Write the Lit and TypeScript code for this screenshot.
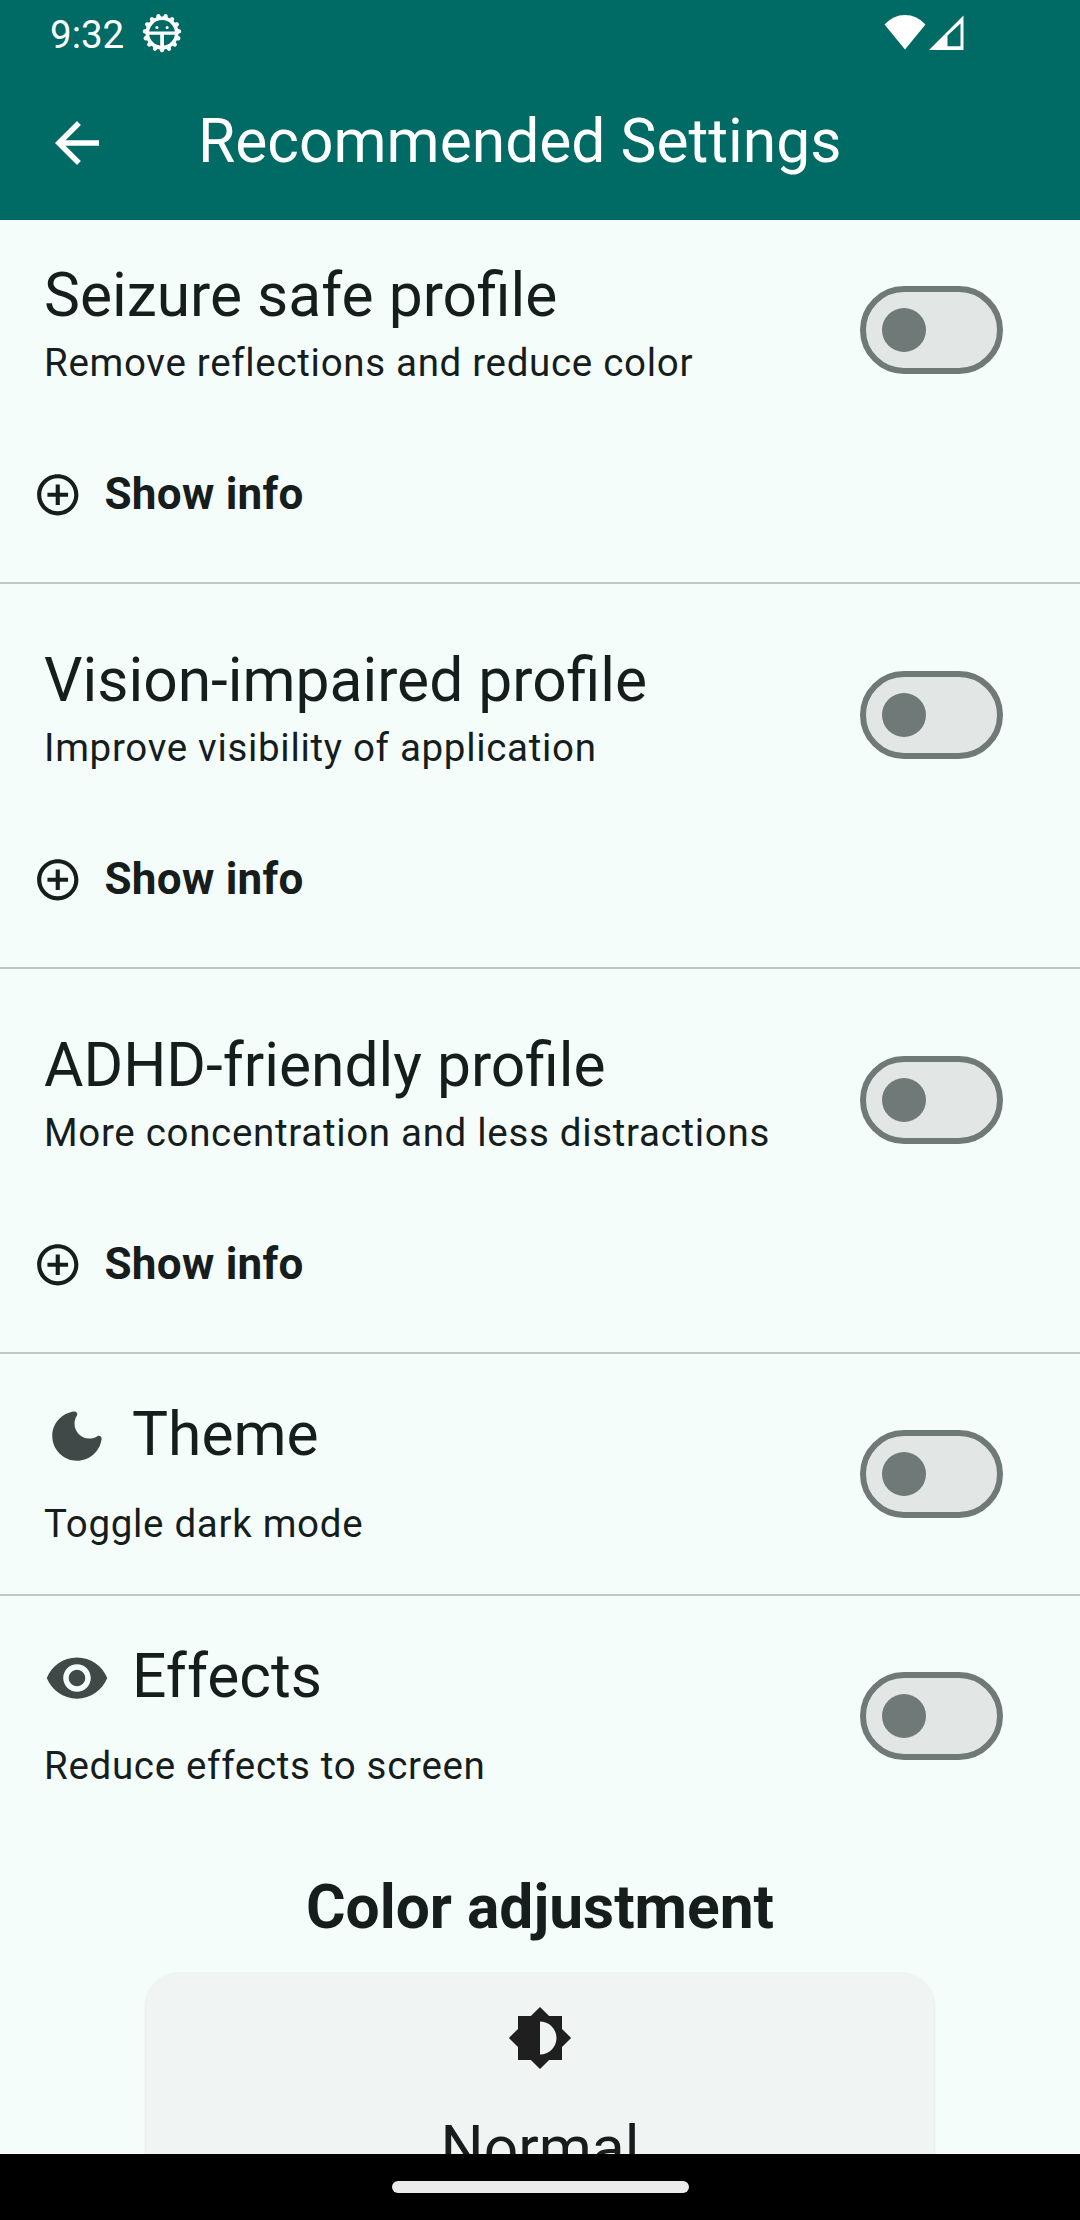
import { LitElement, html, css, svg } from "lit";
import { customElement, property } from "lit/decorators.js";

const ICONS: Record<string, string> = {
  back: "M20 11H7.83l5.59-5.59L12 4l-8 8 8 8 1.41-1.41L7.83 13H20v-2z",
  add: "M13 7h-2v4H7v2h4v4h2v-4h4v-2h-4V7zm-1-5C6.48 2 2 6.48 2 12s4.48 10 10 10 10-4.48 10-10S17.52 2 12 2zm0 18c-4.41 0-8-3.59-8-8s3.59-8 8-8 8 3.59 8 8-3.59 8-8 8z",
  moon: "M11.01 3.05C6.51 3.54 3 7.36 3 12c0 4.97 4.03 9 9 9 4.63 0 8.45-3.5 8.95-8 .09-.79-.78-1.42-1.54-.95-.84.54-1.84.85-2.91.85-2.98 0-5.4-2.42-5.4-5.4 0-1.06.31-2.06.84-2.89.45-.67-.04-1.63-.93-1.56z",
  eye: "M12 4.5C7 4.5 2.73 7.61 1 12c1.73 4.39 6 7.5 11 7.5s9.27-3.11 11-7.5c-1.73-4.39-6-7.5-11-7.5zM12 17c-2.76 0-5-2.24-5-5s2.24-5 5-5 5 2.24 5 5-2.24 5-5 5zm0-8c-1.66 0-3 1.34-3 3s1.34 3 3 3 3-1.34 3-3-1.34-3-3-3z",
  brightness: "M20 15.31L23.31 12 20 8.69V4h-4.69L12 .69 8.69 4H4v4.69L.69 12 4 15.31V20h4.69L12 23.31 15.31 20H20v-4.69zM12 18V6c3.31 0 6 2.69 6 6s-2.69 6-6 6z",
};

const icon = (name: string) => html`<svg class="icon" viewBox="0 0 24 24"><path d=${ICONS[name]} /></svg>`;

@customElement("status-bar")
class StatusBar extends LitElement {
  static styles = css`
    :host { display: flex; align-items: flex-start; height: 66px; padding: 0 116px 0 50px; box-sizing: border-box; color: #fff; }
    .clock { font-size: 38.5px; line-height: 46px; margin-top: 12px; width: 74px; white-space: nowrap; }
    .debug { width: 40px; height: 40px; margin: 13px 0 0 18px; }
    .signals { display: flex; gap: 3px; margin: 15px 0 0 auto; }
    .wifi { width: 42px; height: 35px; }
    .cell { width: 35px; height: 35px; }
  `;
  render() {
    const teeth = Array.from({ length: 15 }, (_, i) => svg`<path transform="rotate(${i * 24 + 12} 20 20)" d="M17.200 5.500L18 2.200Q18.300 .700 20 .700T22 2.200L22.800 5.500z" />`);
    return html`
      <span class="clock">9:32</span>
      <svg class="debug" viewBox="0 0 40 40" fill="#fff">
        ${teeth}
        <circle cx="20" cy="20" r="14.700" fill="none" stroke="#fff" stroke-width="3.600" />
        <path d="M7 18.500h26v3.200H7zM18.200 20h3.800v14h-3.800z" />
        <circle cx="14.900" cy="14.500" r="1.500" /><circle cx="25.100" cy="14.500" r="1.500" />
      </svg>
      <div class="signals">
        <svg class="wifi" viewBox="0 0 42 35" fill="#fff"><path d="M.5 9.5Q9 0 21 0t20.500 9.500L21 34.500z" /></svg>
        <svg class="cell" viewBox="0 0 35 35" fill="#fff"><path fill-rule="evenodd" d="M34.500.500v34.500H0zM18.500 20.500V31.200H31.500V8.500z" /></svg>
      </div>`;
  }
}

@customElement("toggle-switch")
class ToggleSwitch extends LitElement {
  static styles = css`
    :host { display: block; flex: none; }
    .track { display: flex; align-items: center; box-sizing: border-box; width: 143px; height: 88px; padding-left: 16px; border: 6px solid #6f7977; border-radius: 44px; background: #e2e6e5; }
    .thumb { width: 44px; height: 44px; border-radius: 50%; background: #6f7977; }
  `;
  render() {
    return html`<div class="track" role="switch" aria-checked="false"><div class="thumb"></div></div>`;
  }
}

const textStyles = css`
  .title { font-size: 60.5px; line-height: 77px; white-space: nowrap; }
  .subtitle { font-size: 38.5px; line-height: 55px; letter-spacing: 0.6875px; white-space: nowrap; }
  .icon { display: block; flex: none; fill: currentColor; }
`;

@customElement("profile-section")
class ProfileSection extends LitElement {
  @property() heading = "";
  @property() summary = "";
  static styles = [textStyles, css`
    :host { display: flex; flex-direction: column; flex: none; height: 385px; box-sizing: border-box; padding-top: 58px; border-bottom: 2px solid #bec9c7; }
    .row { display: flex; justify-content: space-between; height: 213px; padding: 0 77px 0 44px; }
    .subtitle { margin-top: 1px; }
    .switch { margin-top: 29px; }
    .info { display: flex; align-items: center; gap: 22px; height: 50px; padding-left: 33px; }
    .info .icon { width: 49.5px; height: 49.5px; }
    .label { font-size: 44px; font-weight: 700; line-height: 55px; letter-spacing: 0.275px; margin-top: -1px; }
  `];
  render() {
    return html`
      <div class="row">
        <div>
          <div class="title">${this.heading}</div>
          <div class="subtitle">${this.summary}</div>
        </div>
        <toggle-switch class="switch"></toggle-switch>
      </div>
      <div class="info">${icon("add")}<span class="label">Show info</span></div>`;
  }
}

@customElement("option-section")
class OptionSection extends LitElement {
  @property() heading = "";
  @property() summary = "";
  @property() glyph = "";
  static styles = [textStyles, css`
    :host { display: flex; flex: none; align-items: center; justify-content: space-between; height: 240px; box-sizing: border-box; padding: 0 77px 0 44px; }
    .text { align-self: flex-start; padding-top: 42px; }
    .head { display: flex; align-items: center; gap: 22px; }
    .head .icon { width: 66px; height: 66px; color: #3f4947; margin-top: 3px; }
    .subtitle { margin-top: 23px; }
  `];
  render() {
    return html`
      <div class="text">
        <div class="head">${icon(this.glyph)}<span class="title">${this.heading}</span></div>
        <div class="subtitle">${this.summary}</div>
      </div>
      <toggle-switch></toggle-switch>`;
  }
}

@customElement("app-root")
class AppRoot extends LitElement {
  static styles = [textStyles, css`
    :host { display: flex; flex-direction: column; width: 1080px; height: 2220px; overflow: hidden; background: #f4fdfa; color: #161d1c; font-family: Roboto, "Liberation Sans", sans-serif; }
    .top { flex: none; height: 220px; background: #006a65; color: #fff; }
    .bar { display: flex; align-items: center; gap: 88px; height: 154px; padding-left: 44px; }
    .bar .icon { width: 66px; height: 66px; }
    .bar .title { margin-top: -3px; }
    .content { display: flex; flex-direction: column; flex: 1; min-height: 0; overflow: hidden; }
    .first { margin-top: -21px; }
    .divided { border-bottom: 2px solid #bec9c7; height: 242px; }
    .section-title { flex: none; margin-top: 33px; text-align: center; font-weight: 700; }
    .card { display: flex; flex-direction: column; flex: none; align-items: center; align-self: center; box-sizing: border-box; width: 788px; height: 260px; margin-top: 26px; padding-top: 33px; border-radius: 33px; background: #f0f4f3; box-shadow: 0 2px 3px rgba(0, 0, 0, 0.14); }
    .card .icon { width: 66px; height: 66px; color: #1f1f1f; }
    .card .title { margin-top: 39px; }
    .nav { display: flex; flex: none; justify-content: center; height: 66px; background: #000; }
    .pill { width: 297px; height: 12px; margin-top: 27px; border-radius: 6px; background: #ebebeb; }
  `];
  render() {
    return html`
      <header class="top">
        <status-bar></status-bar>
        <div class="bar">${icon("back")}<span class="title">Recommended Settings</span></div>
      </header>
      <main class="content">
        <profile-section class="first" heading="Seizure safe profile" summary="Remove reflections and reduce color"></profile-section>
        <profile-section heading="Vision-impaired profile" summary="Improve visibility of application"></profile-section>
        <profile-section heading="ADHD-friendly profile" summary="More concentration and less distractions"></profile-section>
        <option-section class="divided" glyph="moon" heading="Theme" summary="Toggle dark mode"></option-section>
        <option-section glyph="eye" heading="Effects" summary="Reduce effects to screen"></option-section>
        <div class="title section-title">Color adjustment</div>
        <div class="card">${icon("brightness")}<span class="title">Normal</span></div>
      </main>
      <footer class="nav"><div class="pill"></div></footer>`;
  }
}
